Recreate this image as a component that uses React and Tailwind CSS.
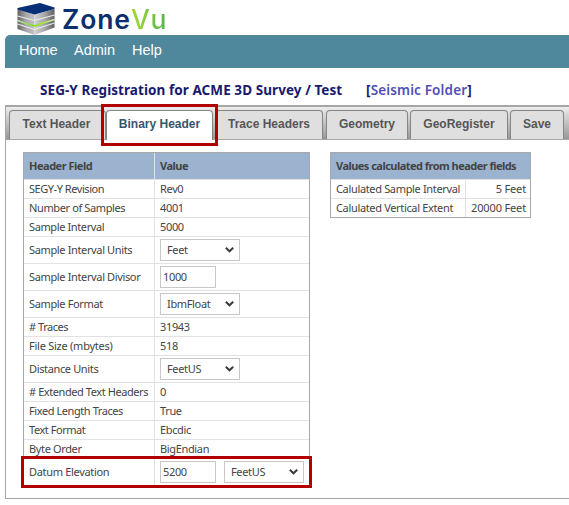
import React from 'react';

const TABS = [
    { label: 'Text Header', className: 'w-[97px] pr-[2px]' },
    { label: 'Binary Header', className: 'w-[107px]', active: true },
    { label: 'Trace Headers', className: 'w-[108px] ml-[2px]' },
    { label: 'Geometry', className: 'w-[82px] ml-[3px]' },
    { label: 'GeoRegister', className: 'w-[98px] ml-[2px]' },
    { label: 'Save', className: 'w-[54px] ml-[2px]' },
];

const ROWS = [
    { label: 'SEGY-Y Revision', value: 'Rev0', fit: 'tracking-[-0.45px]' },
    { label: 'Number of Samples', value: '4001', fit: 'tracking-[-0.38px]' },
    { label: 'Sample Interval', value: '5000', fit: 'tracking-[-0.38px]' },
    { label: 'Sample Interval Units', select: 'Feet', fit: 'tracking-[-0.36px]' },
    { label: 'Sample Interval Divisor', input: '1000', fit: 'tracking-[-0.36px]' },
    { label: 'Sample Format', select: 'IbmFloat', fit: 'tracking-[-0.36px]' },
    { label: '# Traces', value: '31943', fit: 'tracking-[-0.45px]' },
    { label: 'File Size (mbytes)', value: '518', fit: 'tracking-[-0.25px]' },
    { label: 'Distance Units', select: 'FeetUS', fit: 'tracking-[-0.36px]' },
    { label: '# Extended Text Headers', value: '0', fit: 'tracking-[-0.42px]' },
    { label: 'Fixed Length Traces', value: 'True', fit: 'tracking-[-0.42px]' },
    { label: 'Text Format', value: 'Ebcdic', fit: 'tracking-[-0.45px]' },
    { label: 'Byte Order', value: 'BigEndian', fit: 'tracking-[-0.36px]' },
    { label: 'Datum Elevation', input: '5200', select: 'FeetUS', fit: 'tracking-[-0.32px]' },
];

// Stacked layers cube
function CubeLogo() {
    return (
        <svg width="40" height="33" viewBox="0 0 40 33" className="shrink-0">
            <defs>
                <linearGradient id="left" x1="0" x2="1" y1="0" y2="0">
                    <stop offset="0" stopColor="#626264" />
                    <stop offset="0.5" stopColor="#a9a9ab" />
                    <stop offset="1" stopColor="#c2c2c4" />
                </linearGradient>
                <linearGradient id="right" x1="0" x2="1" y1="0" y2="0">
                    <stop offset="0" stopColor="#d2d2d4" />
                    <stop offset="0.5" stopColor="#a8a8aa" />
                    <stop offset="1" stopColor="#5e5e60" />
                </linearGradient>
                <linearGradient id="seam" x1="0" x2="1" y1="0" y2="0">
                    <stop offset="0" stopColor="#c9dcc0" />
                    <stop offset="0.4" stopColor="#7be018" />
                    <stop offset="0.65" stopColor="#9bea20" />
                    <stop offset="1" stopColor="#d8e8cc" />
                </linearGradient>
            </defs>
            <path d="M1.500 7 18.500 12.500V33L1.500 27Z" fill="url(#left)" />
            <path d="M18.500 12.500 38.500 7V25.500L18.500 33Z" fill="url(#right)" />
            <path d="M1.500 6 24 1 38.500 5.500V7L18.500 12.500 1.500 7.500Z" fill="#062f78" />
            <path d="M1.500 14 18.500 18.500 38.500 13" fill="none" stroke="#ececec" strokeWidth="1.100" />
            <path d="M1.500 18.500 10 21.500 19 24 27 21 38.500 17.500" fill="none" stroke="url(#seam)" strokeWidth="1.500" />
            <path d="M1.500 22 18.500 27.500 38.500 21" fill="none" stroke="#ececec" strokeWidth="1.100" />
        </svg>
    );
}

function SelectBox({ value }) {
    return (
        <div className="flex h-[22px] w-20 items-center justify-between border border-[#c8c8c8] bg-white pr-[5px] pb-px pl-[6px] leading-none">
            <span>{value}</span>
            <svg width="9" height="6" viewBox="0 0 9 6">
                <path d="M0.800 0.800 4.500 4.300 8.200 0.800" fill="none" stroke="#3c3c3c" strokeWidth="2" />
            </svg>
        </div>
    );
}

function InputBox({ value }) {
    return (
        <div className="flex h-[22px] w-14 items-center border border-[#c8c8c8] bg-white pb-[2px] pl-[2px] leading-none">
            {value}
        </div>
    );
}

function HeaderTable() {
    return (
        <div className="w-[287px] border border-[#a9a9a9]">
            <div className="flex h-[26px] bg-[#9cb3cf] font-bold tracking-[-0.48px]">
                <div className="flex w-[131px] items-center border-r border-[#e2e2e2] pl-[5px]">Header Field</div>
                <div className="flex items-center pl-[5px]">Value</div>
            </div>
            {ROWS.map((row) => {
                const tall = row.select || row.input;
                return (
                    <div key={row.label} className={`flex border-t border-[#e2e2e2] ${tall ? 'h-[27px]' : 'h-[19px]'}`}>
                        <div className={`flex w-[131px] items-center border-r border-[#e2e2e2] pl-[5px] whitespace-nowrap ${row.fit}`}>{row.label}</div>
                        <div className="flex items-center gap-2 pl-[5px] tracking-[-0.35px]">
                            {row.value}
                            {row.input && <InputBox value={row.input} />}
                            {row.select && <SelectBox value={row.select} />}
                        </div>
                    </div>
                );
            })}
        </div>
    );
}

function CalculatedRow({ label, value }) {
    return (
        <div className="flex h-[19px] border-t border-[#e2e2e2] tracking-[-0.34px]">
            <div className="flex w-[135px] items-center border-r border-[#e2e2e2] pl-[5px] whitespace-nowrap">{label}</div>
            <div className="flex flex-1 items-center justify-end pr-1 tracking-[-0.15px] whitespace-nowrap">{value}</div>
        </div>
    );
}

function App() {
    return (
        <div className="relative h-[505px] w-[569px] overflow-hidden bg-white pl-[5px] font-['Noto_Sans','Open_Sans',sans-serif] text-[11px] text-[#444]">
            <header className="flex h-[35px] items-start pt-[2px] pl-[11px]">
                <CubeLogo />
                <div className="ml-[6px] flex font-[Inter,sans-serif] text-[26.5px] leading-[34px] font-semibold tracking-[0.9px]">
                    <span className="text-[#0a2f6b]">Zone</span>
                    <span className="bg-linear-to-r from-[#a3d930] to-[#4fb54a] bg-clip-text font-medium text-transparent">Vu</span>
                </div>
            </header>

            <nav className="flex h-[33px] items-center rounded-tl-[5px] bg-[#4f889d] pb-[2px] pl-[14px] font-['Liberation_Sans',sans-serif] text-[14.5px] text-white">
                <span className="w-[55px]">Home</span>
                <span className="w-[58px]">Admin</span>
                <span>Help</span>
            </nav>

            <div className="flex h-[37px] items-center pt-[8px] pl-[35px] text-[13.5px] font-bold whitespace-nowrap text-[#191970]">
                <h1 className="w-[326px] tracking-[0.07px]">SEG-Y Registration for ACME 3D Survey / Test</h1>
                <span className="tracking-[0.15px]">[<span className="font-semibold text-[#5050b8]">Seismic Folder</span>]</span>
            </div>

            <section className="h-[394px] border-t-2 border-b border-l border-[#a6a6a6] bg-white">
                <div className="flex h-[33px] items-end border-b border-[#a6a6a6] bg-linear-to-b from-[#ededed] to-[#989898] pl-[3px]">
                    {TABS.map((tab) => (
                        <div
                            key={tab.label}
                            className={`flex shrink-0 items-center justify-center rounded-t-[4px] border border-b-0 border-[#858585] font-['Liberation_Sans',sans-serif] text-[12px] font-bold whitespace-nowrap ${tab.active ? '-mb-px h-[30px] bg-white pb-1 text-[#35566a]' : 'h-[29px] bg-[#dfdfdf] pb-[3px] text-[#555]'} ${tab.className}`}
                        >
                            {tab.label}
                        </div>
                    ))}
                </div>
                <div className="flex items-start gap-5 pt-[12px] pl-[17px]">
                    <HeaderTable />
                    <div className="w-[201px] border border-[#a9a9a9]">
                        <div className="flex h-[26px] items-center bg-[#9cb3cf] pl-[5px] font-bold tracking-[-0.53px] whitespace-nowrap">
                            Values calculated from header fields
                        </div>
                        <CalculatedRow label="Calulated Sample Interval" value="5 Feet" />
                        <CalculatedRow label="Calulated Vertical Extent" value="20000 Feet" />
                    </div>
                </div>
            </section>

            {/* Callout outlines */}
            <div className="absolute top-[104px] left-[101px] h-[42px] w-[117px] border-3 border-[#b00000]" />
            <div className="absolute top-[456px] left-[21px] h-[32px] w-[291px] border-3 border-[#b00000]" />
        </div>
    );
}

export default App;
